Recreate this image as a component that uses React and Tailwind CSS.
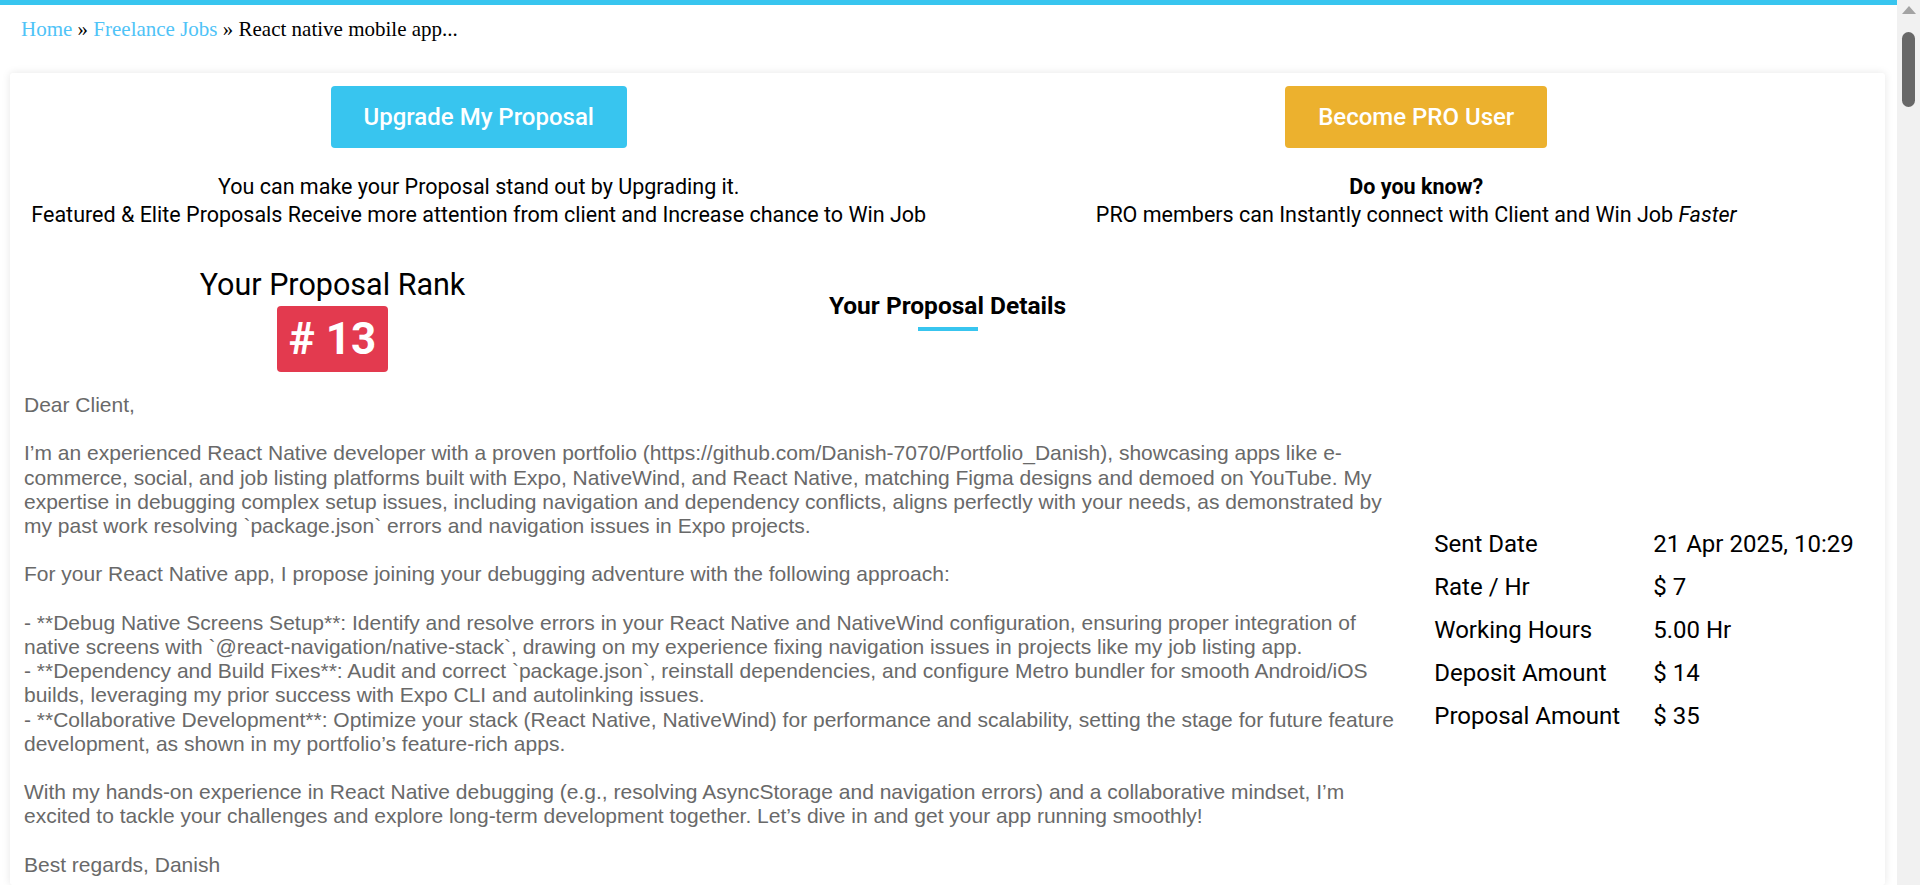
import React from "react";

const proposal = `Dear Client,

I’m an experienced React Native developer with a proven portfolio (https://github.com/Danish-7070/Portfolio_Danish), showcasing apps like e-
commerce, social, and job listing platforms built with Expo, NativeWind, and React Native, matching Figma designs and demoed on YouTube. My
expertise in debugging complex setup issues, including navigation and dependency conflicts, aligns perfectly with your needs, as demonstrated by
my past work resolving \`package.json\` errors and navigation issues in Expo projects.

For your React Native app, I propose joining your debugging adventure with the following approach:

- **Debug Native Screens Setup**: Identify and resolve errors in your React Native and NativeWind configuration, ensuring proper integration of
native screens with \`@react-navigation/native-stack\`, drawing on my experience fixing navigation issues in projects like my job listing app.
- **Dependency and Build Fixes**: Audit and correct \`package.json\`, reinstall dependencies, and configure Metro bundler for smooth Android/iOS
builds, leveraging my prior success with Expo CLI and autolinking issues.
- **Collaborative Development**: Optimize your stack (React Native, NativeWind) for performance and scalability, setting the stage for future feature
development, as shown in my portfolio’s feature-rich apps.

With my hands-on experience in React Native debugging (e.g., resolving AsyncStorage and navigation errors) and a collaborative mindset, I’m
excited to tackle your challenges and explore long-term development together. Let’s dive in and get your app running smoothly!

Best regards, Danish`;

const details = [
  ["Sent Date", "21 Apr 2025, 10:29"],
  ["Rate / Hr", "$ 7"],
  ["Working Hours", "5.00 Hr"],
  ["Deposit Amount", "$ 14"],
  ["Proposal Amount", "$ 35"],
];

export default function App() {
  return (
    <div className="flex h-[885px] w-full overflow-hidden bg-white font-['Roboto',sans-serif] text-black">
      <main className="flex min-w-0 flex-1 flex-col">
        <div className="h-[5px] w-full bg-[#38c5ef]" />
        <nav className="px-[21px] pt-[12px] font-['Liberation_Serif',serif] text-[21px] leading-[24px]">
          <a className="text-[#4fc3f7]">Home</a>
          <span> » </span>
          <a className="text-[#4fc3f7]">Freelance Jobs</a>
          <span> » React native mobile app...</span>
        </nav>

        <section className="ml-[10px] mr-[12px] mt-[32px] flex-1 rounded-[3px] bg-white shadow-[0_0_8px_rgba(0,0,0,0.1)]">
          <div className="grid grid-cols-2 pt-[13px]">
            <div className="flex flex-col items-center text-center">
              <button className="h-[62px] rounded-[4px] bg-[#38c5ef] px-[33px] text-[24px] font-medium text-white">
                Upgrade My Proposal
              </button>
              <p className="mt-[25px] text-[21.5px] leading-[28px]">
                You can make your Proposal stand out by Upgrading it.
                <br />
                Featured &amp; Elite Proposals Receive more attention from client and Increase chance to Win Job
              </p>
            </div>
            <div className="flex flex-col items-center text-center">
              <button className="h-[62px] rounded-[4px] bg-[#ecb12e] px-[33px] text-[24px] font-medium text-white">
                Become PRO User
              </button>
              <p className="mt-[25px] text-[21.5px] leading-[28px]">
                <span className="font-bold">Do you know?</span>
                <br />
                PRO members can Instantly connect with Client and Win Job <em>Faster</em>
              </p>
            </div>
          </div>

          <div className="mt-[38px] grid grid-cols-3">
            <div className="flex flex-col items-center pl-[20px]">
              <h3 className="text-[30.5px] leading-[36px]">Your Proposal Rank</h3>
              <div className="mt-[3px] h-[66px] rounded-[4px] bg-[#e33a4f] px-[12px] text-[44px] font-bold leading-[66px] text-white">
                # 13
              </div>
            </div>
            <div className="flex flex-col items-center pt-[24px]">
              <h4 className="text-[24.5px] font-bold leading-[30px]">Your Proposal Details</h4>
              <div className="mt-[6px] h-[4px] w-[60px] bg-[#38c5ef]" />
            </div>
            <div />
          </div>

          <div className="mt-[21px] grid grid-cols-[9fr_3fr]">
            <div className="min-w-0 overflow-hidden whitespace-pre pl-[14px] font-['Liberation_Sans',Arial,sans-serif] text-[21px] leading-[24.2px] text-[#696969]">
              {proposal}
            </div>
            <div className="flex items-center pb-[10px] pl-[18px]">
              <div className="grid grid-cols-[219px_auto] text-[24px] leading-[43px]">
                {details.map(([k, v]) => (
                  <React.Fragment key={k}>
                    <div>{k}</div>
                    <div>{v}</div>
                  </React.Fragment>
                ))}
              </div>
            </div>
          </div>
        </section>
      </main>

      <aside className="flex h-full w-[23px] shrink-0 flex-col items-center bg-[#f1f1f1]">
        <div className="mt-[6px] h-0 w-0 border-x-[7px] border-b-[8px] border-x-transparent border-b-[#a3a3a3]" />
        <div className="mt-[18px] h-[75px] w-[13px] rounded-full bg-[#686868]" />
      </aside>
    </div>
  );
}
